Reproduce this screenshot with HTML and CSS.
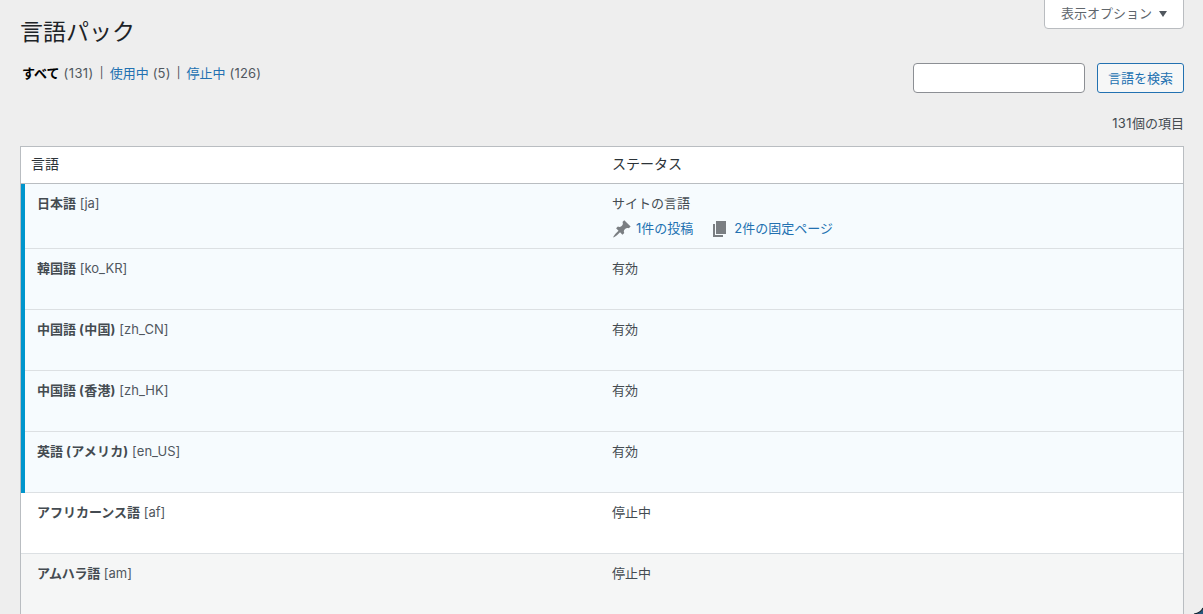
FILE: index.html
```html
<!DOCTYPE html>
<html lang="ja">
<head>
<meta charset="utf-8">
<title>言語パック</title>
<link rel="stylesheet" href="styles.css">
</head>
<body>
<main class="page">
  <button class="screen-options">表示オプション <svg class="caret" viewBox="0 0 8 6"><path d="M0 0h8L4 6z"/></svg></button>
  <h1 class="title">言語パック</h1>
  <div class="toolbar">
    <nav class="filters">
      <span class="current">すべて</span><span class="count wide">(131)</span><span class="sep">|</span><a>使用中</a><span class="count">(5)</span><span class="sep">|</span><a>停止中</a><span class="count">(126)</span>
    </nav>
    <form class="search">
      <input class="search-input" type="text">
      <button class="search-button" type="button">言語を検索</button>
    </form>
  </div>
  <div class="total"><span class="number">131</span>個の項目</div>
  <section class="table">
    <div class="row head"><div>言語</div><div>ステータス</div></div>
    <div class="row active first">
      <div><b>日本語</b> <span class="code">[ja]</span></div>
      <div>サイトの言語
        <div class="links">
          <svg class="icon" viewBox="0 0 20 20"><path d="M10.44 3.02l1.82-1.82 6.36 6.35-1.83 1.82c-1.05-.68-2.48-.57-3.41.36l-.75.75c-.92.93-1.04 2.35-.35 3.41l-1.83 1.82-2.41-2.41-2.8 2.79c-.42.42-3.38 2.71-3.8 2.29s1.86-3.39 2.28-3.81l2.79-2.79L4.1 9.36l1.83-1.82c1.05.69 2.48.57 3.4-.36l.75-.75c.93-.92 1.05-2.35.36-3.41z"/></svg>
          <a class="posts">1件の投稿</a>
          <svg class="icon" viewBox="0 0 20 20"><path d="M6 15V2h10v13H6zm-1 1h8v2H3V5h2v11z"/></svg>
          <a>2件の固定ページ</a>
        </div>
      </div>
    </div>
    <div class="row active"><div><b>韓国語</b> <span class="code">[ko_KR]</span></div><div>有効</div></div>
    <div class="row active"><div><b>中国語 <span class="region">(中国)</span></b> <span class="code">[zh_CN]</span></div><div>有効</div></div>
    <div class="row active"><div><b>中国語 <span class="region">(香港)</span></b> <span class="code">[zh_HK]</span></div><div>有効</div></div>
    <div class="row active"><div><b>英語 <span class="region">(アメリカ)</span></b> <span class="code">[en_US]</span></div><div>有効</div></div>
    <div class="row"><div><b>アフリカーンス語</b> <span class="code">[af]</span></div><div>停止中</div></div>
    <div class="row alt"><div><b class="tight">アムハラ語</b> <span class="code">[am]</span></div><div>停止中</div></div>
  </section>
  <svg class="corner" viewBox="0 0 10 10"><path class="outside" d="M10 4C8.500 7.500 6 9.300 1 10h9z"/><path class="edge" d="M10 4C8.500 7.500 6 9.300 1 10"/></svg>
</main>
</body>
</html>
```
FILE: styles.css
```css
* { box-sizing: border-box; }
body {
  margin: 0;
  background: #eee;
  color: #444b51;
  font: 13px/20px Inter, "Noto Sans CJK JP", sans-serif;
}
a { color: #2271b1; }
button, input { font: inherit; }
.page {
  position: relative;
  height: 614px;
  padding: 17px 19px 0 20px;
  overflow: hidden;
}
.screen-options {
  position: absolute;
  top: -1px;
  right: 19px;
  width: 140px;
  height: 30px;
  padding: 0 16px 2px 16px;
  display: flex;
  align-items: center;
  justify-content: space-between;
  background: #fff;
  border: 1px solid #b9bcc0;
  border-radius: 0 0 4px 4px;
  color: #60666c;
}
.caret { width: 8px; height: 6px; margin-top: 1px; fill: #50575e; }
.title {
  margin: 0;
  font-size: 23px;
  line-height: 31px;
  font-weight: 400;
  color: #1d2327;
}
.toolbar {
  display: flex;
  justify-content: space-between;
  align-items: flex-start;
  padding-top: 15px;
}
.filters { display: flex; padding-left: 2px; }
.current { font-weight: 700; color: #000; }
.count { margin-left: 4px; letter-spacing: .15px; color: #50575e; }
.wide { letter-spacing: .4px; }
.sep { width: 16px; text-align: center; font-size: 11px; }
.search { display: flex; gap: 12px; }
.search-input {
  width: 172px;
  height: 30px;
  background: #fff;
  border: 1px solid #8c8f94;
  border-radius: 4px;
}
.search-button {
  width: 87px;
  height: 30px;
  padding: 0 0 1px;
  background: #f6f7f7;
  border: 1px solid #2271b1;
  border-radius: 3px;
  color: #2271b1;
}
.total { margin-top: 20px; text-align: right; }
.number { letter-spacing: .4px; }
.table {
  margin-top: 13px;
  background: #fff;
  border: 1px solid #b9bdc1;
}
.row {
  display: grid;
  grid-template-columns: 575px 1fr;
  height: 61px;
  padding: 9px 0 0 16px;
  border-bottom: 1px solid #dce0e3;
}
.head {
  height: 37px;
  grid-template-columns: 581px 1fr;
  padding: 7px 0 0 10px;
  border-color: #b9bdc1;
  font-size: 14px;
  color: #2c3338;
}
.active {
  border-bottom: 0;
  background:
    linear-gradient(#0095cc, #0095cc) left / 4px 100% no-repeat,
    linear-gradient(#dce0e3, #dce0e3) bottom / 100% 1px no-repeat,
    #f6fbfe;
}
.first { height: 65px; }
.alt { background: #f5f6f6; }
.region { letter-spacing: .2px; }
.tight { letter-spacing: -.2px; }
.code { color: #50575e; }
.links { display: flex; align-items: center; margin-top: 5px; }
.icon { width: 20px; height: 20px; margin: 1px 4px 0 0; fill: #7a7e82; }
.posts { margin-right: 17px; }
.links a { margin-top: -1px; }
.corner { position: absolute; right: 0; bottom: 0; width: 10px; height: 10px; }
.outside { fill: #24567c; }
.edge { fill: none; stroke: #10202c; stroke-width: 1.2; }
```
